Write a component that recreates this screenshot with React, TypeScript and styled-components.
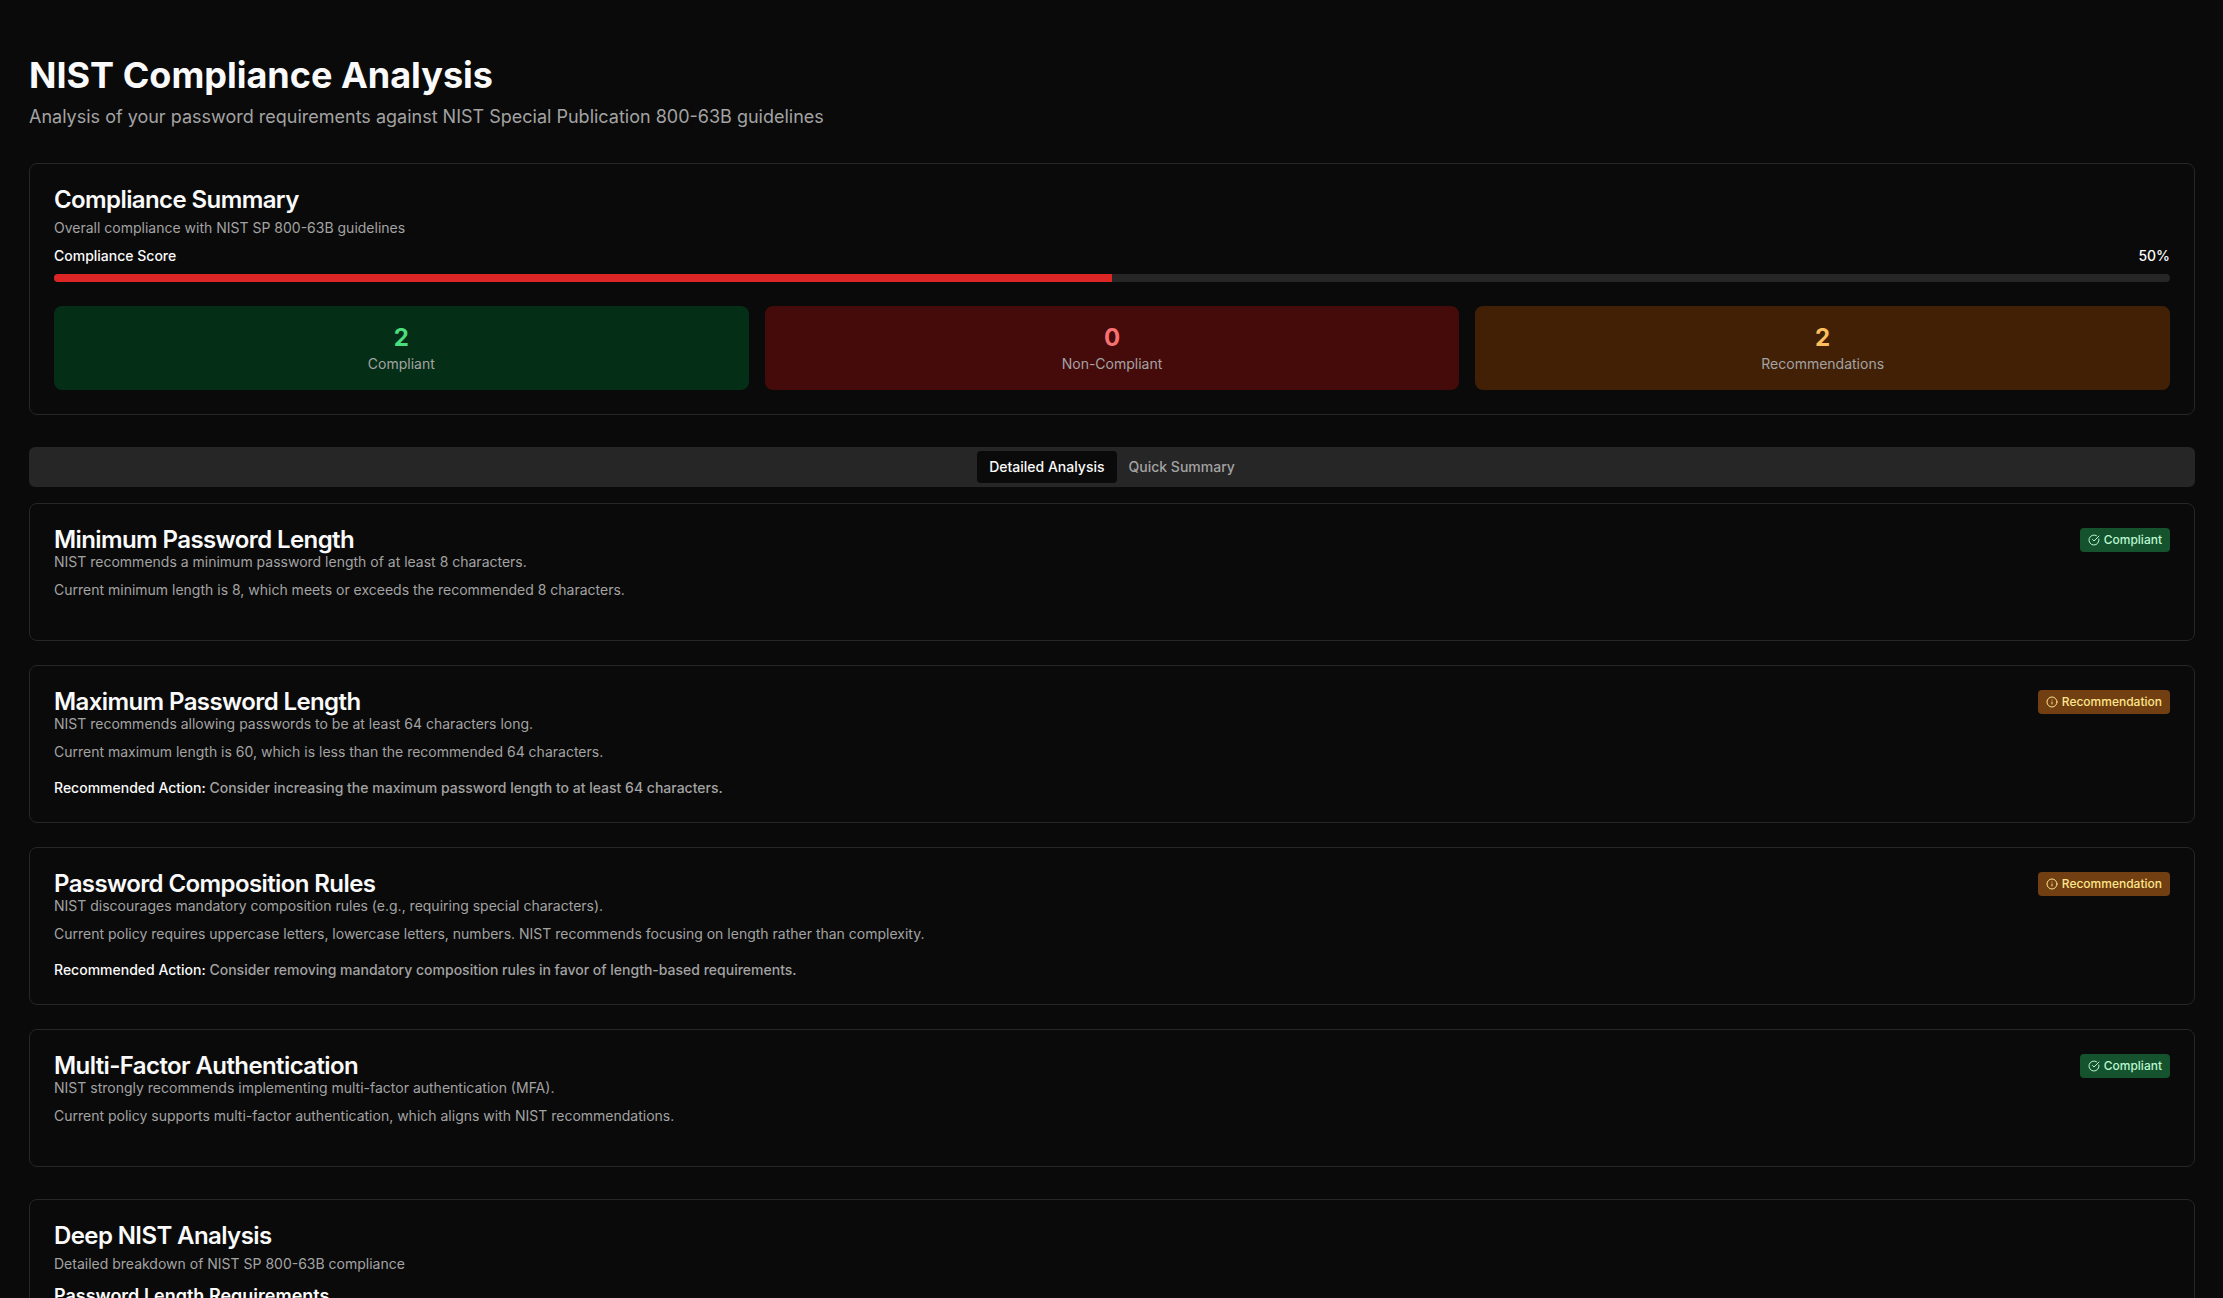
import React from "react";
import styled, { createGlobalStyle } from "styled-components";
import { CircleCheckBig, Info } from "lucide-react";

const GlobalStyle = createGlobalStyle`
  *, *::before, *::after { box-sizing: border-box; margin: 0; padding: 0; }
  html { background: #0a0a0a; }
  body {
    margin: 0;
    height: 100vh;
    overflow: hidden;
    background: #0a0a0a;
    color: #fafafa;
    font-family: Inter, "Liberation Sans", sans-serif;
    font-size: 16px;
    line-height: 24px;
  }
`;

const Page = styled.main`
  padding: 55px 28px 40px 29px;
  display: flex;
  flex-direction: column;
  gap: 32px;
`;

const PageHeader = styled.header`
  display: flex;
  flex-direction: column;
  gap: 8px;
`;

const PageTitle = styled.h1`
  font-size: 36px;
  line-height: 40px;
  font-weight: 700;
`;

const PageLead = styled.p`
  font-size: 18px;
  line-height: 28px;
  color: #a3a3a3;
`;

const Card = styled.section`
  border: 1px solid #262626;
  border-radius: 8px;
  background: #0a0a0a;
  padding: 24px;
  display: flex;
  flex-direction: column;
`;

const CardTitle = styled.h2`
  font-size: 24px;
  line-height: 24px;
  font-weight: 600;
  letter-spacing: -0.6px;
`;

const Muted = styled.p<{ $top?: number }>`
  margin-top: ${(p) => p.$top ?? 0}px;
  font-size: 14px;
  line-height: 20px;
  color: #a3a3a3;
`;

const ScoreRow = styled.div`
  display: flex;
  justify-content: space-between;
  margin: 8px 0;
  font-size: 14px;
  line-height: 20px;
  font-weight: 500;
`;

const Track = styled.div`
  height: 8px;
  border-radius: 4px;
  overflow: hidden;
  background: #262626;
`;

const Fill = styled.div`
  height: 100%;
  background: #dc2626;
`;

const StatGrid = styled.div`
  display: grid;
  grid-template-columns: repeat(3, 1fr);
  gap: 16px;
  margin-top: 24px;
`;

const Stat = styled.div<{ $bg: string }>`
  display: flex;
  flex-direction: column;
  align-items: center;
  padding: 16px;
  border-radius: 8px;
  background: ${(p) => p.$bg};
`;

const StatValue = styled.div<{ $color: string }>`
  font-size: 24px;
  line-height: 32px;
  font-weight: 700;
  color: ${(p) => p.$color};
`;

const TabsSection = styled.div`
  display: flex;
  flex-direction: column;
  gap: 16px;
`;

const TabList = styled.div`
  display: flex;
  justify-content: center;
  align-items: center;
  height: 40px;
  padding: 4px;
  border-radius: 6px;
  background: #262626;
`;

const Tab = styled.button<{ $active?: boolean }>`
  border: 0;
  height: 32px;
  padding: 6px 12px;
  border-radius: 4px;
  font-family: inherit;
  font-size: 14px;
  line-height: 20px;
  font-weight: 500;
  background: ${(p) => (p.$active ? "#0a0a0a" : "transparent")};
  color: ${(p) => (p.$active ? "#fafafa" : "#a3a3a3")};
`;

const RuleList = styled.div`
  display: flex;
  flex-direction: column;
  gap: 24px;
`;

const RuleHead = styled.div`
  display: flex;
  justify-content: space-between;
  align-items: center;
  height: 24px;
`;

const Badge = styled.span<{ $warn: boolean }>`
  display: inline-flex;
  align-items: center;
  gap: 4px;
  height: 24px;
  padding: 0 8px;
  border-radius: 4px;
  font-size: 12px;
  line-height: 16px;
  font-weight: 500;
  background: ${(p) => (p.$warn ? "#713f12" : "#14532d")};
  color: ${(p) => (p.$warn ? "#fde68a" : "#bbf7d0")};
`;

const Action = styled.p`
  margin-top: 16px;
  height: 20px;
  font-size: 14px;
  line-height: 20px;
  font-weight: 500;
  color: #a3a3a3;
`;

const ActionLabel = styled.span`
  color: #fafafa;
`;

const Spacer = styled.div`
  height: 16px;
`;

const SubHeading = styled.h3`
  margin-top: 8px;
  font-size: 18px;
  line-height: 28px;
  font-weight: 600;
`;

const stats = [
  { value: 2, label: "Compliant", bg: "#052e16", color: "#4ade80" },
  { value: 0, label: "Non-Compliant", bg: "#450a0a", color: "#f87171" },
  { value: 2, label: "Recommendations", bg: "#422006", color: "#fbbf5c" },
];

const rules = [
  {
    title: "Minimum Password Length",
    description: "NIST recommends a minimum password length of at least 8 characters.",
    current: "Current minimum length is 8, which meets or exceeds the recommended 8 characters.",
  },
  {
    title: "Maximum Password Length",
    description: "NIST recommends allowing passwords to be at least 64 characters long.",
    current: "Current maximum length is 60, which is less than the recommended 64 characters.",
    action: "Consider increasing the maximum password length to at least 64 characters.",
  },
  {
    title: "Password Composition Rules",
    description: "NIST discourages mandatory composition rules (e.g., requiring special characters).",
    current:
      "Current policy requires uppercase letters, lowercase letters, numbers. NIST recommends focusing on length rather than complexity.",
    action: "Consider removing mandatory composition rules in favor of length-based requirements.",
  },
  {
    title: "Multi-Factor Authentication",
    description: "NIST strongly recommends implementing multi-factor authentication (MFA).",
    current: "Current policy supports multi-factor authentication, which aligns with NIST recommendations.",
  },
];

const score = 50;

export default function App() {
  return (
    <>
      <GlobalStyle />
      <Page>
        <PageHeader>
          <PageTitle>NIST Compliance Analysis</PageTitle>
          <PageLead>
            Analysis of your password requirements against NIST Special Publication 800-63B guidelines
          </PageLead>
        </PageHeader>

        <Card>
          <CardTitle>Compliance Summary</CardTitle>
          <Muted $top={6}>Overall compliance with NIST SP 800-63B guidelines</Muted>
          <ScoreRow>
            <span>Compliance Score</span>
            <span>{score}%</span>
          </ScoreRow>
          <Track>
            <Fill style={{ width: `${score}%` }} />
          </Track>
          <StatGrid>
            {stats.map((s) => (
              <Stat key={s.label} $bg={s.bg}>
                <StatValue $color={s.color}>{s.value}</StatValue>
                <Muted>{s.label}</Muted>
              </Stat>
            ))}
          </StatGrid>
        </Card>

        <TabsSection>
          <TabList role="tablist">
            <Tab role="tab" $active>
              Detailed Analysis
            </Tab>
            <Tab role="tab">Quick Summary</Tab>
          </TabList>
          <RuleList>
            {rules.map((r) => (
              <Card key={r.title}>
                <RuleHead>
                  <CardTitle>{r.title}</CardTitle>
                  <Badge $warn={!!r.action}>
                    {r.action ? <Info size={12} /> : <CircleCheckBig size={12} />}
                    {r.action ? "Recommendation" : "Compliant"}
                  </Badge>
                </RuleHead>
                <Muted>{r.description}</Muted>
                <Muted $top={8}>{r.current}</Muted>
                {r.action ? (
                  <Action>
                    <ActionLabel>Recommended Action:</ActionLabel> {r.action}
                  </Action>
                ) : (
                  <Spacer />
                )}
              </Card>
            ))}
          </RuleList>
        </TabsSection>

        <Card>
          <CardTitle>Deep NIST Analysis</CardTitle>
          <Muted $top={6}>Detailed breakdown of NIST SP 800-63B compliance</Muted>
          <SubHeading>Password Length Requirements</SubHeading>
        </Card>
      </Page>
    </>
  );
}
